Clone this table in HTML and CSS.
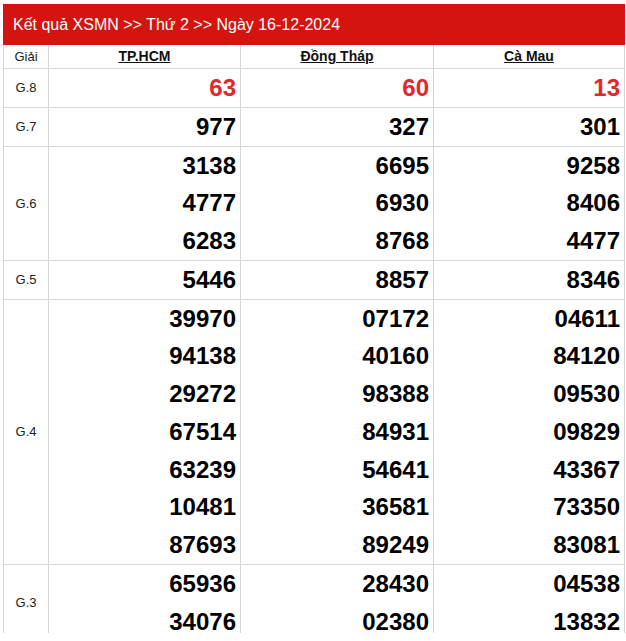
FILE: index.html
```html
<!DOCTYPE html>
<html lang="vi">
<head>
<meta charset="utf-8">
<title>Kết quả XSMN</title>
<link rel="stylesheet" href="styles.css">
</head>
<body>
<div class="page">
  <div class="box">
    <div class="title">Kết quả XSMN &gt;&gt; Thứ 2 &gt;&gt; Ngày 16-12-2024</div>
    <div class="grid">
      <div class="cell label head">Giải</div>
      <div class="cell head"><a class="prov">TP.HCM</a></div>
      <div class="cell head"><a class="prov">Đồng Tháp</a></div>
      <div class="cell head"><a class="prov">Cà Mau</a></div>

      <div class="cell label">G.8</div>
      <div class="cell nums red"><div class="n">63</div></div>
      <div class="cell nums red"><div class="n">60</div></div>
      <div class="cell nums red"><div class="n">13</div></div>

      <div class="cell label">G.7</div>
      <div class="cell nums"><div class="n">977</div></div>
      <div class="cell nums"><div class="n">327</div></div>
      <div class="cell nums"><div class="n">301</div></div>

      <div class="cell label">G.6</div>
      <div class="cell nums"><div class="n">3138</div><div class="n">4777</div><div class="n">6283</div></div>
      <div class="cell nums"><div class="n">6695</div><div class="n">6930</div><div class="n">8768</div></div>
      <div class="cell nums"><div class="n">9258</div><div class="n">8406</div><div class="n">4477</div></div>

      <div class="cell label">G.5</div>
      <div class="cell nums"><div class="n">5446</div></div>
      <div class="cell nums"><div class="n">8857</div></div>
      <div class="cell nums"><div class="n">8346</div></div>

      <div class="cell label">G.4</div>
      <div class="cell nums"><div class="n">39970</div><div class="n">94138</div><div class="n">29272</div><div class="n">67514</div><div class="n">63239</div><div class="n">10481</div><div class="n">87693</div></div>
      <div class="cell nums"><div class="n">07172</div><div class="n">40160</div><div class="n">98388</div><div class="n">84931</div><div class="n">54641</div><div class="n">36581</div><div class="n">89249</div></div>
      <div class="cell nums"><div class="n">04611</div><div class="n">84120</div><div class="n">09530</div><div class="n">09829</div><div class="n">43367</div><div class="n">73350</div><div class="n">83081</div></div>

      <div class="cell label">G.3</div>
      <div class="cell nums"><div class="n">65936</div><div class="n">34076</div></div>
      <div class="cell nums"><div class="n">28430</div><div class="n">02380</div></div>
      <div class="cell nums"><div class="n">04538</div><div class="n">13832</div></div>
    </div>
  </div>
</div>
</body>
</html>
```

FILE: styles.css
```css
html, body {
  margin: 0;
  padding: 0;
  background: #fff;
}
body {
  font-family: "Liberation Sans", Arial, sans-serif;
  color: #000;
}
.page {
  padding: 4px 0 0 3px;
}
.box {
  width: 622px;
  height: 629px;
  overflow: hidden;
}
.title {
  background: #d3140f;
  color: #fff;
  font-size: 16px;
  height: 41px;
  line-height: 41px;
  padding-left: 10px;
  box-sizing: border-box;
}
.grid {
  display: grid;
  grid-template-columns: 45px 192px 193px 191px;
  border-left: 1px solid #d6d6d6;
}
.cell {
  border-right: 1px solid #d6d6d6;
  border-bottom: 1px solid #d6d6d6;
}
.head {
  height: 23px;
  line-height: 23px;
  text-align: center;
  font-size: 14px;
  font-weight: bold;
}
.label.head {
  font-weight: normal;
  font-size: 13px;
}
.prov {
  color: #111;
  text-decoration: underline;
}
.label {
  display: flex;
  align-items: center;
  justify-content: center;
  font-size: 13px;
  color: #222;
}
.nums {
  text-align: right;
  padding-right: 4px;
  font-size: 24px;
  font-weight: bold;
}
.n {
  height: 37.77px;
  line-height: 37.77px;
}
.red {
  color: #e5262b;
}
```
